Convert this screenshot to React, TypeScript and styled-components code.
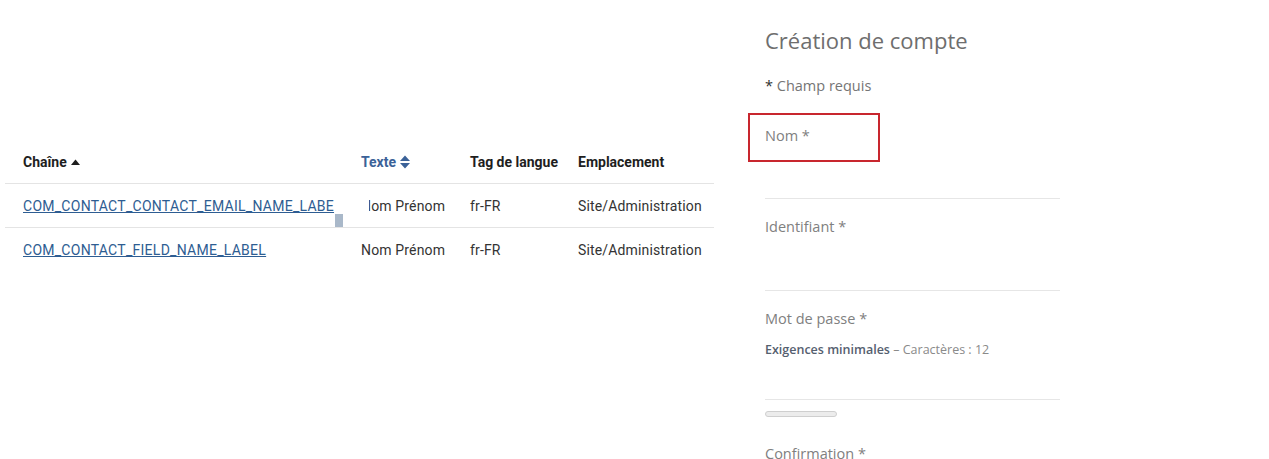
import styled, { createGlobalStyle } from "styled-components";

const GlobalStyle = createGlobalStyle`
  body {
    margin: 0;
    background: #fff;
  }
`;

const Page = styled.div`
  display: flex;
  flex-direction: row;
  width: 1269px;
  height: 459px;
  overflow: hidden;
`;

/* ---------- tableau des chaînes ---------- */

const TablePanel = styled.div`
  width: 714px;
  padding-top: 140px;
  padding-left: 5px;
  box-sizing: border-box;
`;

const Table = styled.div`
  display: grid;
  grid-template-columns: 343px 110px 108px 148px;
  font-family: Roboto, "Liberation Sans", sans-serif;
  font-size: 14px;
  letter-spacing: 0.15px;
  color: #222;
`;

const HeadCell = styled.div<{ $pad: number; $active?: boolean }>`
  position: relative;
  display: flex;
  align-items: center;
  gap: 4px;
  height: 43px;
  padding-left: ${(p) => p.$pad}px;
  font-weight: 700;
  letter-spacing: 0;
  color: ${(p) => (p.$active ? "#3b6298" : "#1e1e1e")};
  border-bottom: 1px solid #e4e4e4;
`;

const Cell = styled.div<{ $pad: number; $last?: boolean }>`
  position: relative;
  display: flex;
  align-items: center;
  height: 43px;
  padding-left: ${(p) => p.$pad}px;
  color: #333;
  border-bottom: ${(p) => (p.$last ? "none" : "1px solid #e4e4e4")};
  white-space: nowrap;
`;

const KeyLink = styled.a`
  color: #2e5d92;
  text-decoration: underline;
  font-weight: 400;
  letter-spacing: 0.27px;
`;

const Clipped = styled.span<{ $cut: number }>`
  margin-left: -${(p) => p.$cut}px;
  clip-path: inset(0 0 0 ${(p) => p.$cut}px);
`;

const ScrollThumb = styled.span`
  position: absolute;
  right: 5px;
  bottom: 0;
  width: 8px;
  height: 13px;
  background: #a9b8c9;
`;

const SortUp = () => (
  <svg width="9" height="6" viewBox="0 0 9 6">
    <path d="M0 6 L4.5 0.5 L9 6 Z" fill="#1e1e1e" />
  </svg>
);

const SortBoth = () => (
  <svg width="10" height="14" viewBox="0 0 10 14">
    <path d="M0 6 L5 0.5 L10 6 Z M0 8 L5 13.5 L10 8 Z" fill="#3b6298" />
  </svg>
);

/* ---------- formulaire de création ---------- */

const FormPanel = styled.div`
  margin-left: 34px;
  width: 320px;
  padding-top: 26px;
  font-family: "Open Sans", "DejaVu Sans", sans-serif;
  color: #7a7a7a;
`;

const Title = styled.h2`
  margin: 0 0 0 17px;
  font-size: 22px;
  line-height: 28px;
  font-weight: 400;
  color: #6e6e6e;
`;

const Required = styled.div`
  margin: 22px 0 17px 17px;
  font-size: 14.5px;
  line-height: 20px;
  color: #757575;

  b {
    color: #2f2f2f;
    font-weight: 400;
  }
`;

const Field = styled.div`
  display: flex;
  flex-direction: column;
  margin-bottom: 5px;
`;

const Label = styled.label<{ $focus?: boolean }>`
  display: block;
  width: 132px;
  box-sizing: border-box;
  padding: 11px 15px 14px;
  border: 2px solid ${(p) => (p.$focus ? "#c8262e" : "transparent")};
  font-size: 14.5px;
  line-height: 20px;
  color: #808080;
  white-space: nowrap;
`;

const Hint = styled.div`
  margin: -3px 0 0 17px;
  font-size: 12.5px;
  line-height: 16px;
  color: #8a8a8a;

  strong {
    color: #55606f;
    font-weight: 600;
  }
`;

const InputLine = styled.div<{ $h: number }>`
  margin-left: 17px;
  width: 295px;
  height: ${(p) => p.$h}px;
  border-bottom: 1px solid #e6e6e6;
`;

const Strength = styled.div`
  margin: 11px 0 14px 17px;
  width: 72px;
  height: 6px;
  box-sizing: border-box;
  border: 1px solid #cfcfcf;
  border-radius: 4px;
  background: #ececec;
`;

const rows = [
  { key: "COM_CONTACT_CONTACT_EMAIL_NAME_LABE", text: "Nom Prénom", cut: 8 },
  { key: "COM_CONTACT_FIELD_NAME_LABEL", text: "Nom Prénom", cut: 0 },
];

export default function App() {
  return (
    <>
      <GlobalStyle />
      <Page>
        <TablePanel>
          <Table>
            <HeadCell $pad={18}>
              Chaîne <SortUp />
            </HeadCell>
            <HeadCell $pad={13} $active>
              Texte <SortBoth />
            </HeadCell>
            <HeadCell $pad={12}>Tag de langue</HeadCell>
            <HeadCell $pad={12}>Emplacement</HeadCell>
            {rows.map((r, i) => {
              const last = i === rows.length - 1;
              return [
                <Cell key={r.key + "a"} $pad={18} $last={last}>
                  <KeyLink href="#">{r.key}</KeyLink>
                  {i === 0 && <ScrollThumb />}
                </Cell>,
                <Cell key={r.key + "b"} $pad={13 + r.cut} $last={last}>
                  {r.cut ? <Clipped $cut={r.cut}>{r.text}</Clipped> : r.text}
                </Cell>,
                <Cell key={r.key + "c"} $pad={12} $last={last}>
                  fr-FR
                </Cell>,
                <Cell key={r.key + "d"} $pad={12} $last={last}>
                  Site/Administration
                </Cell>,
              ];
            })}
          </Table>
        </TablePanel>

        <FormPanel>
          <Title>Création de compte</Title>
          <Required>
            <b>*</b> Champ requis
          </Required>
          <Field>
            <Label $focus>Nom *</Label>
            <InputLine $h={36} />
          </Field>
          <Field>
            <Label>Identifiant *</Label>
            <InputLine $h={37} />
          </Field>
          <Field>
            <Label>Mot de passe *</Label>
            <Hint>
              <strong>Exigences minimales</strong> – Caractères : 12
            </Hint>
            <InputLine $h={41} />
          </Field>
          <Strength />
          <Field>
            <Label>Confirmation *</Label>
          </Field>
        </FormPanel>
      </Page>
    </>
  );
}
